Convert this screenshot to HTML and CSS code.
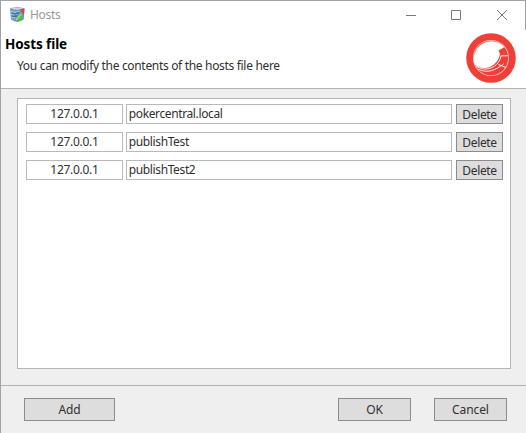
FILE: index.html
```
<!DOCTYPE html>
<html lang="en">
<head>
<meta charset="utf-8">
<title>Hosts</title>
<link rel="stylesheet" href="styles.css">
</head>
<body>
<div class="window">
  <header class="header">
    <div class="titlebar">
      <svg class="app-icon" width="17" height="17" viewBox="0 0 17 17">
        <path d="M1 2.500Q8-.5 15.500 2.500L14.800 13.500Q8 18 2 13.500Z" fill="#8295b8"/>
        <path d="M2 2.500Q8 .5 14 2.500Q8 5 2 2.500Z" fill="#c7d7e6"/>
        <path d="M2 5.500Q6 7.500 10 5.500M2.300 8.300Q5 10 8 8.500M2.500 11Q4 12 6 11.500" fill="none" stroke="#c3d8e8" stroke-width="1"/>
        <path d="M3 7Q6 8.500 10 6.500M3 10Q5 11 8 9.500" fill="none" stroke="#2777bb" stroke-width="1.500"/>
        <path d="M11 3.500L15.500 2.500L15 9L13 7Z" fill="#c94a50"/>
        <path d="M6 14.500L12 7L14.500 9L13 13L9 16Z" fill="#54b84e"/>
        <path d="M7 14L12.500 8" stroke="#9de38d" stroke-width="1.200"/>
      </svg>
      <span class="caption">Hosts</span>
      <svg class="controls" width="104" height="12" viewBox="0 0 104 12" fill="none" stroke="#777" stroke-width="1">
        <path d="M0 6.500H10M45.500 1.500H54.500V10.500H45.500Z"/>
        <path d="M91 1L101 11M101 1L91 11"/>
      </svg>
    </div>
    <div class="intro">
      <div>
        <h1>Hosts file</h1>
        <p>You can modify the contents of the hosts file here</p>
      </div>
      <svg class="logo" width="50" height="50" viewBox="0 0 50 50">
        <circle cx="25" cy="25" r="24.800" fill="#ee4037"/>
        <circle cx="25" cy="25" r="18" fill="#fbc5c1"/>
        <circle cx="25" cy="25" r="17.200" fill="#ee4037"/>
        <path d="M38.500 14L32.500 17.500L34 21C33 28 27 34 20 35C15 35.500 11 33.500 8.500 31.500A17.800 17.800 0 0 1 38.500 14Z" fill="#fff"/>
        <path d="M35 22.800H42.300M32.500 31.500L40 34.500M10 33C20 40 33 34 35 22.800M12 36C21 41 30 37 37.500 31" fill="none" stroke="#fff" stroke-width=".9"/>
      </svg>
    </div>
  </header>
  <main class="content">
    <div class="list">
      <div class="row"><div class="field ip">127.0.0.1</div><div class="field host">pokercentral.local</div><button class="delete">Delete</button></div>
      <div class="row"><div class="field ip">127.0.0.1</div><div class="field host">publishTest</div><button class="delete">Delete</button></div>
      <div class="row"><div class="field ip">127.0.0.1</div><div class="field host">publishTest2</div><button class="delete">Delete</button></div>
    </div>
  </main>
  <footer class="footer">
    <button class="add">Add</button>
    <button class="ok">OK</button>
    <button class="cancel">Cancel</button>
  </footer>
</div>
</body>
</html>
```
FILE: styles.css
```
* { box-sizing: border-box; }
body {
  margin: 0;
  font: 12px/16px "Noto Sans", "Open Sans", sans-serif;
  letter-spacing: -0.32px;
  color: #303030;
}
.window {
  width: 526px;
  height: 433px;
  display: flex;
  flex-direction: column;
  background: #efefef;
  border-top: 1px solid #a2a2a2;
  border-left: 1px solid #a2a2a2;
}
.header {
  height: 88px;
  background: #fff;
  border-bottom: 1px solid #b2b2b2;
}
.titlebar {
  height: 29px;
  display: flex;
  align-items: center;
  padding: 0 15px 2px 8px;
  border-right: 1px solid #a2a2a2;
}
.caption { margin-left: 4px; color: #999; letter-spacing: -0.3px; }
.controls { margin-left: auto; }
.intro {
  display: flex;
  justify-content: space-between;
  padding: 4px 10px 0 4px;
}
h1 {
  margin: 1px 0 0;
  font-size: 13.5px;
  line-height: 18px;
  letter-spacing: -0.1px;
  color: #000;
}
p { margin: 5px 0 0 12px; }
.logo { margin-top: -1px; }
.content {
  height: 296px;
  padding: 9px 15px 16px 16px;
}
.list {
  height: 271px;
  display: flex;
  flex-direction: column;
  gap: 8px;
  padding: 5px 7px 0 8px;
  background: #fff;
  border: 1px solid #b4b5ba;
}
.row { display: flex; gap: 3px; height: 20px; }
.field {
  border: 1px solid #b8b9be;
  background: #fff;
  line-height: 18px;
  padding-left: 2px;
}
.ip { width: 97px; padding: 0; text-align: center; letter-spacing: -0.3px; }
.host { width: 327px; letter-spacing: -0.38px; }
button {
  font: inherit;
  letter-spacing: inherit;
  color: inherit;
  padding: 0;
  border: 1px solid #8c8c8c;
  background: #ddd;
  border-radius: 0;
}
.delete { width: 47px; margin-left: 1px; padding-top: 1px; line-height: 18px; }
.footer {
  flex: 1;
  display: flex;
  align-items: flex-start;
  border-top: 1px solid #b2b2b2;
  padding: 12px 19px 0 23px;
}
.footer button { height: 23px; width: 73px; padding-top: 1px; letter-spacing: -0.1px; }
.footer .add { width: 91px; }
.ok { margin-left: auto; }
.cancel { margin-left: 23px; }
```
